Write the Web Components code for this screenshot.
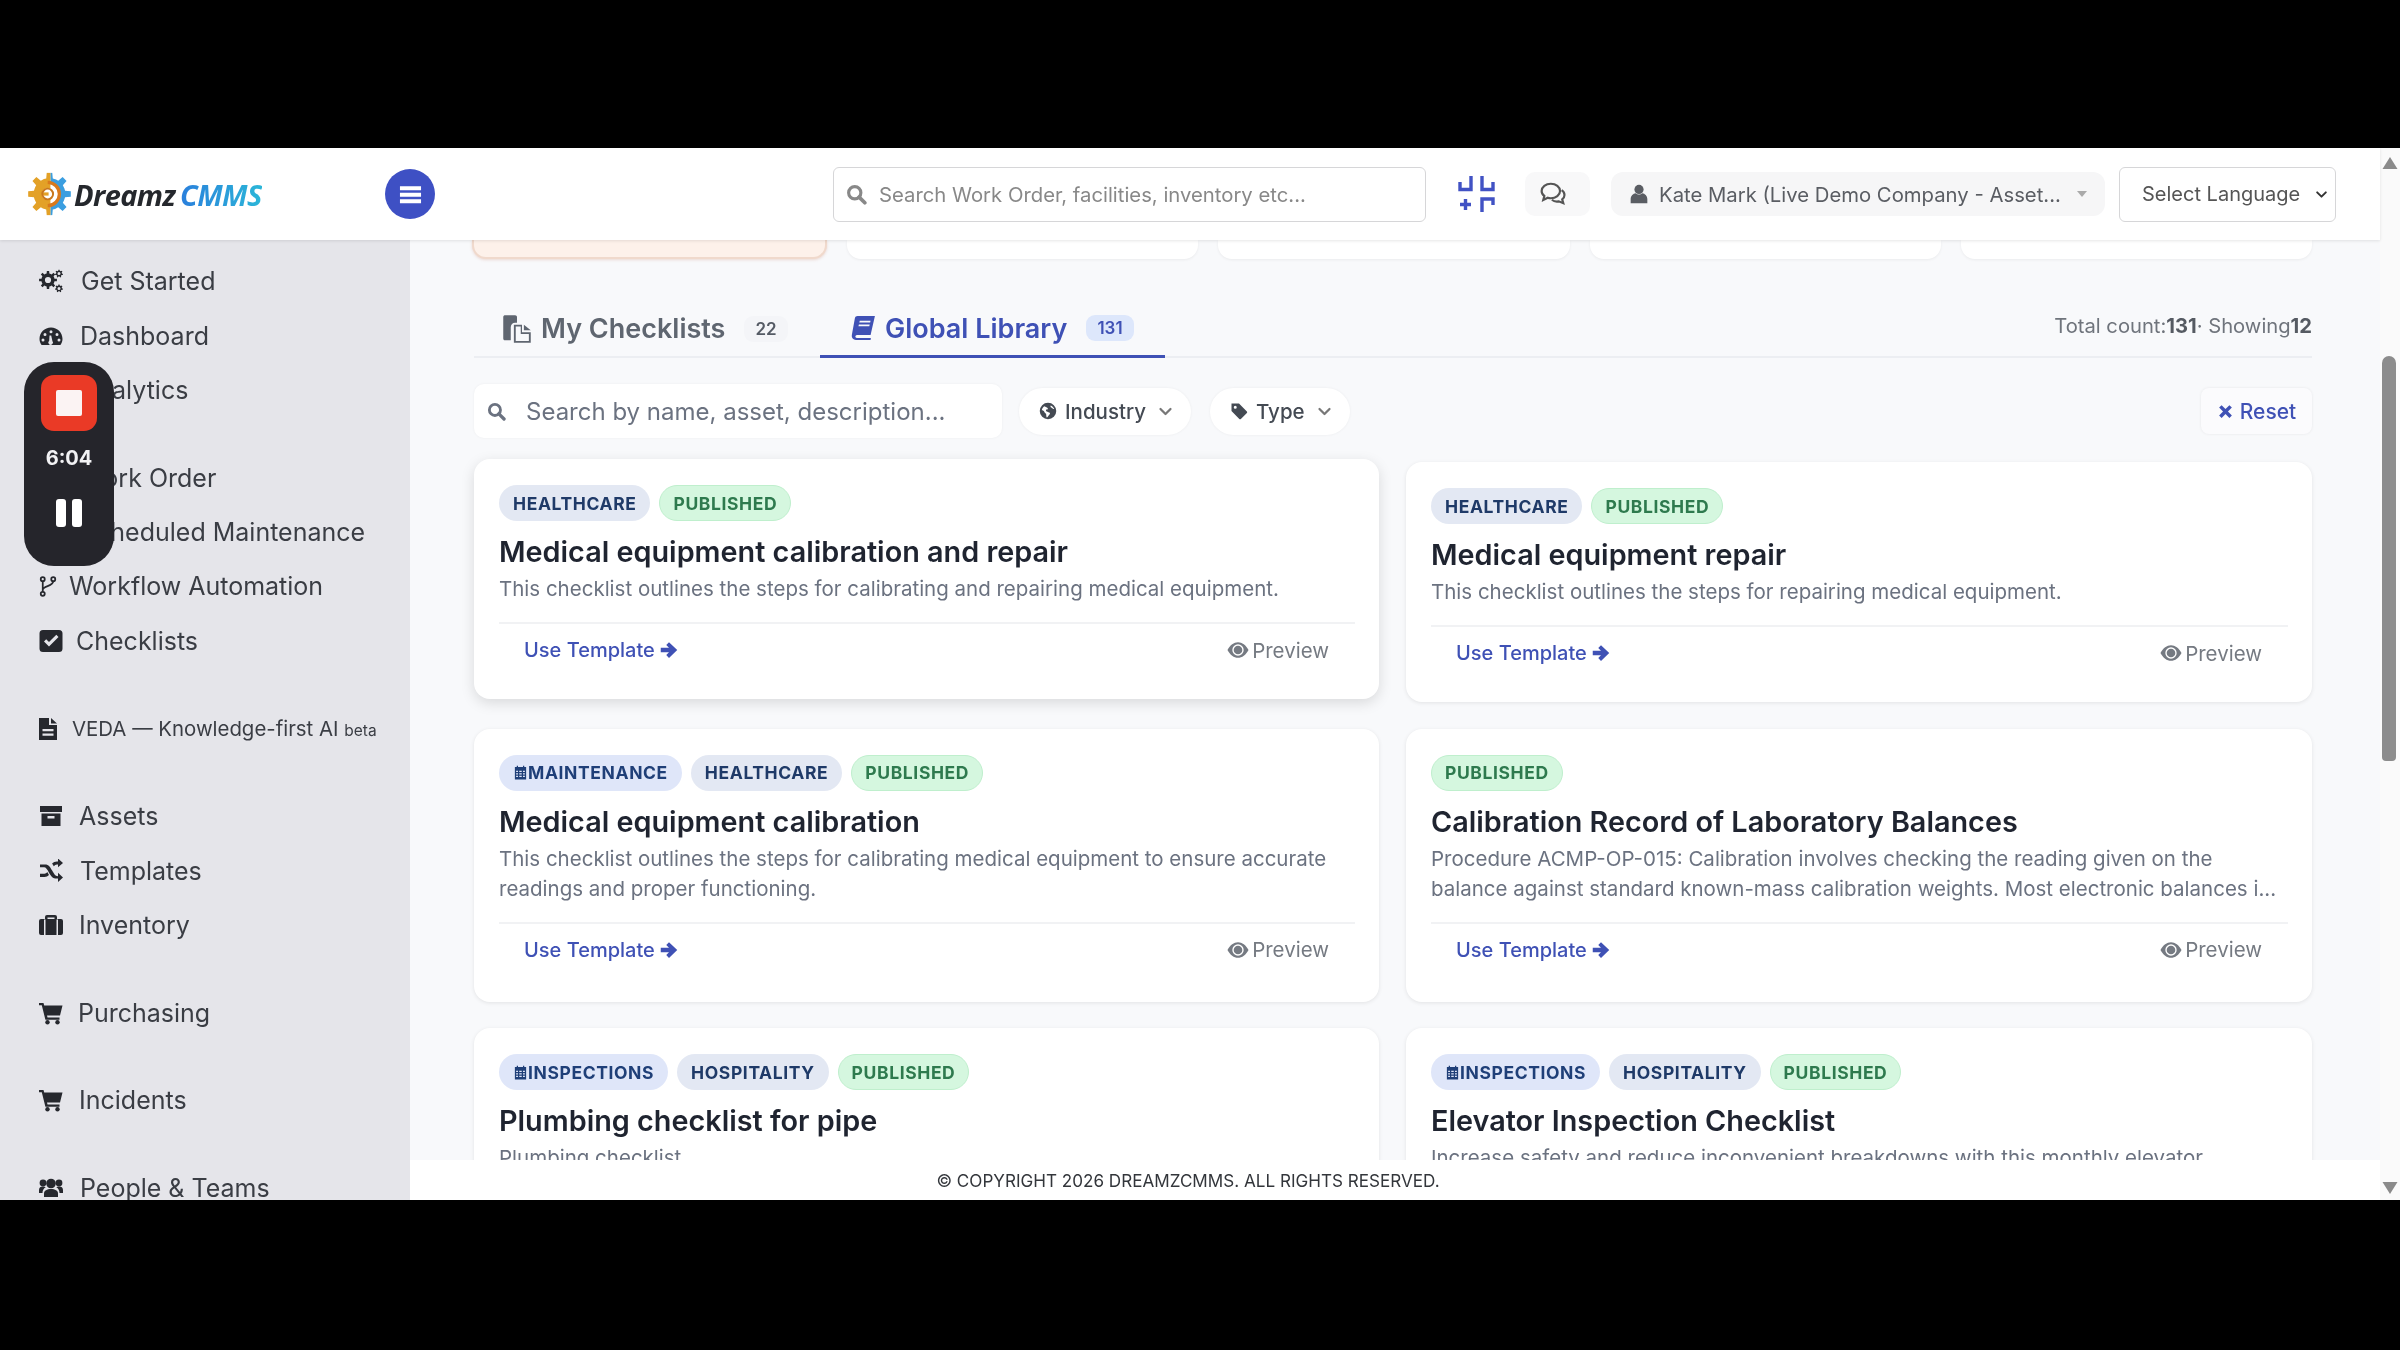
<!DOCTYPE html>
<html lang="en"><head><meta charset="utf-8"><title>DreamzCMMS</title>
<style>
html,body{margin:0;padding:0;background:#000;overflow:hidden;height:100%}
body{font-family:Inter,"Liberation Sans",sans-serif;color:#2f3238}
</style></head><body>
<x-app>
  <x-topbar slot="top"></x-topbar>
  <x-sidebar slot="side">
    <x-navgroup>
      <x-navitem icon="cogs" w="42">Get Started</x-navitem>
      <x-navitem icon="dash" w="41">Dashboard</x-navitem>
      <x-navitem icon="bars" w="41">Analytics</x-navitem>
    </x-navgroup>
    <x-navgroup>
      <x-navitem icon="file" w="41">Work Order</x-navitem>
      <x-navitem icon="cal" w="41">Scheduled Maintenance</x-navitem>
      <x-navitem icon="fork" w="30">Workflow Automation</x-navitem>
      <x-navitem icon="check" w="37">Checklists</x-navitem>
    </x-navgroup>
    <x-navgroup><x-navitem icon="file" w="33" small>VEDA — Knowledge-first AI <small>beta</small></x-navitem></x-navgroup>
    <x-navgroup>
      <x-navitem icon="archive" w="40">Assets</x-navitem>
      <x-navitem icon="random" w="41">Templates</x-navitem>
      <x-navitem icon="case" w="40">Inventory</x-navitem>
    </x-navgroup>
    <x-navgroup><x-navitem icon="cart" w="39">Purchasing</x-navitem></x-navgroup>
    <x-navgroup><x-navitem icon="cart" w="40">Incidents</x-navitem></x-navgroup>
    <x-navgroup><x-navitem icon="users" w="41">People &amp; Teams</x-navitem></x-navgroup>
  </x-sidebar>
  <x-main slot="main">
    <x-statrow></x-statrow>
    <x-tabs></x-tabs>
    <x-filters></x-filters>
    <x-cardgrid>
      <x-card hover>
        <x-tag slot="tags" kind="ind">HEALTHCARE</x-tag><x-tag slot="tags" kind="pub">PUBLISHED</x-tag>
        <span slot="title">Medical equipment calibration and repair</span>
        This checklist outlines the steps for calibrating and repairing medical equipment.
      </x-card>
      <x-card>
        <x-tag slot="tags" kind="ind">HEALTHCARE</x-tag><x-tag slot="tags" kind="pub">PUBLISHED</x-tag>
        <span slot="title">Medical equipment repair</span>
        This checklist outlines the steps for repairing medical equipment.
      </x-card>
      <x-card>
        <x-tag slot="tags" kind="cat">MAINTENANCE</x-tag><x-tag slot="tags" kind="ind">HEALTHCARE</x-tag><x-tag slot="tags" kind="pub">PUBLISHED</x-tag>
        <span slot="title">Medical equipment calibration</span>
        This checklist outlines the steps for calibrating medical equipment to ensure accurate readings and proper functioning.
      </x-card>
      <x-card>
        <x-tag slot="tags" kind="pub">PUBLISHED</x-tag>
        <span slot="title">Calibration Record of Laboratory Balances</span>
        Procedure ACMP-OP-015: Calibration involves checking the reading given on the<br>balance against standard known-mass calibration weights. Most electronic balances i...
      </x-card>
      <x-card>
        <x-tag slot="tags" kind="cat">INSPECTIONS</x-tag><x-tag slot="tags" kind="ind">HOSPITALITY</x-tag><x-tag slot="tags" kind="pub">PUBLISHED</x-tag>
        <span slot="title">Plumbing checklist for pipe</span>
        Plumbing checklist
      </x-card>
      <x-card>
        <x-tag slot="tags" kind="cat">INSPECTIONS</x-tag><x-tag slot="tags" kind="ind">HOSPITALITY</x-tag><x-tag slot="tags" kind="pub">PUBLISHED</x-tag>
        <span slot="title">Elevator Inspection Checklist</span>
        Increase safety and reduce inconvenient breakdowns with this monthly elevator
      </x-card>
    </x-cardgrid>
  </x-main>
  <x-footer slot="foot">© COPYRIGHT 2026 DREAMZCMMS. ALL RIGHTS RESERVED.</x-footer>
  <x-scrollbar slot="bar"></x-scrollbar>
</x-app>
<x-recorder></x-recorder>
<script>
function gear(cx,cy,r,n,hole){
  let d='';const ri=r*.74,st=Math.PI*2/n;
  for(let i=0;i<n;i++){
    const a=i*st-Math.PI/2,w=st*.22;
    const p=[[ri,a-st*.5+w*.2],[ri,a-w*1.2],[r,a-w*.75],[r,a+w*.75],[ri,a+w*1.2]];
    p.forEach((q,j)=>{d+=(i==0&&j==0?'M':'L')+(cx+q[0]*Math.cos(q[1])).toFixed(2)+' '+(cy+q[0]*Math.sin(q[1])).toFixed(2)});
  }
  d+='Z';
  if(hole)d+=`M${cx-hole} ${cy}a${hole} ${hole} 0 1 0 ${hole*2} 0a${hole} ${hole} 0 1 0 ${-hole*2} 0Z`;
  return d;
}
const ICONS={
 cogs:`<path fill-rule="evenodd" d="${gear(9,11,9,8,3.1)}"/><path fill-rule="evenodd" d="${gear(20,4.6,4,7,1.5)}"/><path fill-rule="evenodd" d="${gear(20,19.4,4,7,1.5)}"/>`,
 dash:`<path fill-rule="evenodd" d="M2.6 21C1.4 19.4.5 17.3.5 15 .5 8.6 5.6 3.5 12 3.5S23.500 8.600 23.500 15c0 2.300-.9 4.400-2.100 6zM12 6.200a1.500 1.500 0 1 0 0 3 1.500 1.500 0 0 0 0-3zM6 9a1.500 1.500 0 1 0 0 3 1.500 1.500 0 0 0 0-3zM18 9a1.500 1.500 0 1 0 0 3 1.500 1.500 0 0 0 0-3zM4 14.500a1.500 1.500 0 1 0 0 3 1.500 1.500 0 0 0 0-3zM20 14.500a1.500 1.500 0 1 0 0 3 1.500 1.500 0 0 0 0-3zM10.500 11.500l-.3 5.200a2.300 2.300 0 1 0 3.200.3l-1.200-5.500z"/>`,
 bars:`<path d="M2 21h20v2H2zM4 12h4v8H4zM10 5h4v15h-4zM16 9h4v11h-4z"/>`,
 cal:`<path fill-rule="evenodd" d="M2 4h20v18H2zM4 9v11h16V9z"/>`,
 fork:`<g fill="none" stroke="currentColor" stroke-width="2"><circle cx="6" cy="3.600" r="2.300"/><circle cx="6" cy="20.400" r="2.300"/><circle cx="18" cy="3.600" r="2.300"/><path d="M6 6v12M18 6c0 6-12 5-12 10"/></g>`,
 check:`<path fill-rule="evenodd" d="M4 1h16a3.500 3.500 0 0 1 3.500 3.500v15A3.500 3.500 0 0 1 20 23H4a3.500 3.500 0 0 1-3.500-3.500v-15A3.500 3.500 0 0 1 4 1zM5 12.500l5 5L19.500 8 17.300 5.800 10 13 7.200 10.300z"/>`,
 file:`<path fill-rule="evenodd" d="M3 1h10v7h8v15H3zM15 1l6 5.500h-6zM6.500 12v2.200h11V12zM6.500 16.500v2.200h11v-2.200z"/>`,
 archive:`<path fill-rule="evenodd" d="M1 2h22v6H1zM2.500 9.500h19V22h-19zM8.500 12v2.500h7V12z"/>`,
 random:`<path d="M1 6h5c4 0 5 2.500 7 6s3 6 6 6h0v-3.500l5 5-5 4.500v-3.500h-1c-4.500 0-6-2.500-8-6s-3-5.500-5-5.500H1zM1 15.500h4.500c1 0 2-.6 2.800-1.600l1.700 3c-1.200 1.300-2.700 2-4.500 2H1zM19 3V0l5 4.500L19 9V6h-1c-1.500 0-2.400.8-3.200 2l-1.700-3C14.300 3.800 16 3 18 3z" transform="translate(0 -.5) scale(1 .98)"/>`,
 case:`<path fill-rule="evenodd" d="M8 2h8a2 2 0 0 1 2 2v2h4a2 2 0 0 1 2 2v12a2 2 0 0 1-2 2H2a2 2 0 0 1-2-2V8a2 2 0 0 1 2-2h4V4a2 2 0 0 1 2-2zM8.500 4.500V6h7V4.500zM5 6.500V22h1.500V6.500zM17.500 6.500V22H19V6.500z"/>`,
 cart:`<path fill-rule="evenodd" d="M0 2h4.500l.7 2.500H23.500l-2.500 10H8l.5 2h12v2.300H6.400L2.800 4.300H0z"/><circle cx="8.500" cy="21.300" r="2.200"/><circle cx="18.500" cy="21.300" r="2.200"/>`,
 users:`<circle cx="12" cy="7.500" r="4.800"/><path d="M5 21v-3.500C5 14.500 8 13 12 13s7 1.500 7 4.500V21z"/><circle cx="4" cy="7" r="3.400"/><circle cx="20" cy="7" r="3.400"/><path d="M0 17v-3c0-2.500 1.500-3.500 4-3.500 1 0 2 .2 2.700.7C4.500 12.500 3.500 14.500 3.500 17zM24 17v-3c0-2.500-1.500-3.500-4-3.500-1 0-2 .2-2.700.7 2.200 1.300 3.200 3.300 3.200 5.800z"/>`,
 search:`<circle cx="10" cy="10" r="7" fill="none" stroke="currentColor" stroke-width="3.600"/><path d="M15 15l6.500 6.500" stroke="currentColor" stroke-width="4.200" stroke-linecap="round"/>`,
 arrow:`<path d="M12 1.500L23 12 12 22.500 8.300 18.800 12 15H1V9h11L8.300 5.200z"/>`,
 eye:`<path fill-rule="evenodd" d="M.5 12C3.500 6.500 7.500 3.500 12 3.500S20.500 6.500 23.500 12c-3 5.500-7 8.500-11.500 8.500S3.500 17.500.5 12zM12 5.800a6.200 6.200 0 1 0 0 12.400 6.200 6.200 0 0 0 0-12.400z"/><circle cx="12" cy="12" r="4.700"/>`,
 xmark:`<path d="M3 6.500L6.500 3 12 8.500 17.500 3 21 6.500 15.500 12 21 17.500 17.500 21 12 15.500 6.500 21 3 17.500 8.500 12z"/>`,
 globe:`<path fill-rule="evenodd" d="M12 1a11 11 0 1 1 0 22 11 11 0 0 1 0-22zM7 5.500c-1.500 1-3 3-3.200 5.500 1.500 0 2.700.7 3.200 2 .5 1.500 2 1.700 2.500 3 .3 1 0 3 .8 4.500 1.200 0 1.500-1 2.500-2.500 1-1.300 2-2 1.800-3.500-1-1.200-3-1.200-4.500-2-1-.7-1-1.800-.5-2.500 1.200.3 2-.2 2.300-1.500C11 7 9 6.500 7 5.500zM15.500 4.500c-.5 1.300 0 2.700 1.500 3 1 .7 1.800 2.200 3.300 1.700-.8-2-2.500-3.800-4.800-4.700z"/>`,
 tag:`<path fill-rule="evenodd" d="M2 2h10l10.500 10.500c.6.600.6 1.500 0 2.100l-8 8c-.6.600-1.500.6-2.100 0L2 12zM7 5a2 2 0 1 0 0 4 2 2 0 0 0 0-4z"/>`,
 down:`<path d="M4 8l8 8 8-8" fill="none" stroke="currentColor" stroke-width="3.600" stroke-linecap="round" stroke-linejoin="round"/>`,
 book:`<path fill-rule="evenodd" d="M7 1h16l-4 17.500H6.500c-1.200 0-1.700 1-1.500 1.800.2.600.8.900 1.500.9h12.200c.6 0 .6.500.5.900l-.3.900H5.500C3 23 1.300 21 1.700 18.500L4.500 3C4.800 1.700 5.700 1 7 1zM9 5.200l-.4 1.700h10l.4-1.700zM8.200 8.700l-.4 1.700h10l.4-1.700z"/>`,
 docs:`<path fill-rule="evenodd" d="M1 2.500C1 1.500 1.700 1 2.500 1h8c.8 0 1.500.6 1.500 1.500V7h-1.500c-2 0-3.500 1.500-3.500 3.500V21H2.500C1.700 21 1 20.500 1 19.500z"/><path fill-rule="evenodd" d="M9.500 8.500H16v6h7V23H9.500zM17.500 8.500l5.500 4.500h-5.500zM11 10v11.500h10.500V16H15v-6z"/>`,
 cal2:`<path fill-rule="evenodd" d="M3 3h3V1h2v2h8V1h2v2h3v20H3zM5 9v2h3V9zM10 9v2h4V9zM16 9v2h3V9zM5 13v2h3v-2zM10 13v2h4v-2zM16 13v2h3v-2zM5 17v2h3v-2zM10 17v2h4v-2zM16 17v2h3v-2z"/>`,
 user:`<circle cx="12" cy="6.500" r="5.500"/><path d="M2 23v-5c0-4 3-6.500 6-7 1 1 2.500 1.500 4 1.500s3-.5 4-1.500c3 .5 6 3 6 7v5z"/>`,
 chat:`<g fill="none" stroke="currentColor" stroke-width="2"><path d="M10 2.500c4.700 0 8.500 2.900 8.500 6.700s-3.800 6.700-8.500 6.700c-1 0-2-.1-2.800-.4L3 17.500l1-3.700C2.300 12.600 1.500 11 1.500 9.200 1.500 5.400 5.300 2.500 10 2.500z"/><path d="M20 8.500c1.600 1.100 2.600 2.700 2.600 4.500 0 1.600-.8 3-2.100 4l1 3.500-4.200-1.700c-2.200.4-4.700-.1-6.300-1.500"/></g>`,
 shrink:`<g fill="none" stroke="currentColor" stroke-width="3.400"><path d="M2 8v7.500h11V2M24 2v13.500h11V8M24 38V25h11v6"/><path d="M2 30.500h11M7.500 25v11"/></g>`,
 bars3:`<path d="M1 3.500h22v4H1zM1 10.300h22v4H1zM1 17h22v4H1z" />`,
 caret:`<path d="M2 6h20L12 18z"/>`,
 up:`<path d="M12 4l10 16H2z"/>`,
 dn:`<path d="M2 4h20L12 20z"/>`
};
function svg(name,w,h,vb){return `<svg xmlns="http://www.w3.org/2000/svg" width="${w}" height="${h||w}" viewBox="${vb||'0 0 24 24'}" fill="currentColor" style="display:block;flex:none">${ICONS[name]}</svg>`}
function def(tag,html,init){customElements.define(tag,class extends HTMLElement{
  constructor(){super();this.attachShadow({mode:'open'}).innerHTML=typeof html==='function'?html(this):html}
  connectedCallback(){if(typeof html==='function')this.shadowRoot.innerHTML=html(this);if(init)init(this)}
})}

def('x-app',`<style>
:host{display:grid;margin-top:148px;height:1052px;width:2400px;overflow:hidden;position:relative;background:#f8f9fb;filter:blur(.5px);
grid-template-columns:410px 1970px 20px;grid-template-rows:92px 920px 40px}
.t{grid-column:1/3;grid-row:1;display:flex;z-index:2}
.s{grid-column:1;grid-row:2/4;display:flex;min-height:0}
.m{grid-column:2;grid-row:2;display:flex;min-height:0;overflow:hidden}
.f{grid-column:2;grid-row:3;display:flex}
.b{grid-column:3;grid-row:1/4;display:flex}
::slotted(*){flex:1;min-width:0}
</style><div class="t"><slot name="top"></slot></div><div class="s"><slot name="side"></slot></div><div class="m"><slot name="main"></slot></div><div class="f"><slot name="foot"></slot></div><div class="b"><slot name="bar"></slot></div>`);

def('x-topbar',()=>`<style>
:host{display:flex;align-items:center;background:#fff;box-shadow:0 1px 3px rgba(0,0,0,.1);box-sizing:border-box;padding-left:28px;color:#555}
.logo{display:flex;align-items:center;width:234px;flex:none}
.lt{font:italic 700 29px "Open Sans",sans-serif;letter-spacing:-.6px;color:#25282d;margin-left:3px;white-space:nowrap}
.lt b{color:#2b8fd8;background:linear-gradient(90deg,#2a7fdc,#2bb6d8);-webkit-background-clip:text;background-clip:text;-webkit-text-fill-color:transparent;margin-left:5px;font-weight:700}
.ham{width:50px;height:50px;border-radius:50%;background:#3e50c4;color:#fff;display:flex;align-items:center;justify-content:center;margin-left:123px;flex:none}
.search{width:593px;height:55px;box-sizing:border-box;border:1px solid #d6d6d8;border-radius:6px;display:flex;align-items:center;padding-left:12px;gap:12px;margin-left:398px;color:#888;font-size:20.300px;flex:none;white-space:nowrap}
.grid{margin-left:32px;color:#4152c4;flex:none;display:flex}
.chat{margin-left:30px;width:65px;height:44px;box-sizing:border-box;padding-right:9px;background:#f8f8f9;border-radius:10px;display:flex;align-items:center;justify-content:center;color:#555;flex:none}
.user{margin-left:21px;width:494px;height:44px;box-sizing:border-box;background:#f6f6f7;border-radius:12px;display:flex;align-items:center;padding:0 17px 0 18px;gap:10px;font-size:20.300px;color:#5a5d63;white-space:nowrap;flex:none}
.user span{flex:1}.user i{color:#aaa;display:flex}
.lang{margin-left:14px;width:217px;height:55px;box-sizing:border-box;border:1px solid #d6d6d8;border-radius:6px;background:#fff;font-size:20px;color:#555;padding:0 7px 0 22px;flex:none;display:flex;align-items:center;justify-content:space-between;white-space:nowrap}
.lang i{display:flex;color:#333}
</style>
<div class="logo"><svg width="43" height="44" viewBox="0 0 24 24" style="flex:none"><defs><clipPath id="l"><rect width="12.500" height="24"/></clipPath><clipPath id="r"><rect x="12.500" width="12" height="24"/></clipPath></defs>
<path clip-path="url(#r)" fill="#3b9ee0" fill-rule="evenodd" d="${gear(12,12,12,8,5.500)}"/><path clip-path="url(#l)" fill="#e3a127" fill-rule="evenodd" d="${gear(12,12,12,8,0)}"/>
<path d="M11 5.500a6.500 6.500 0 0 1 0 13" fill="none" stroke="#d9791c" stroke-width="1.800"/><circle cx="11" cy="12" r="3.400" fill="#fff"/><path d="M6.500 12h5" stroke="#e3a127" stroke-width="1.800"/><circle cx="11" cy="12" r="3" fill="none" stroke="#c9771d" stroke-width="1.100"/></svg>
<span class="lt">Dreamz<b>CMMS</b></span></div>
<div class="ham">${svg('bars3',23)}</div>
<div class="search">${svg('search',21)}<span>Search Work Order, facilities, inventory etc...</span></div>
<div class="grid">${svg('shrink',37,42,'0 0 37 40')}</div>
<div class="chat">${svg('chat',26)}</div>
<div class="user">${svg('user',20)}<span>Kate Mark (Live Demo Company - Asset...</span><i>${svg('caret',12)}</i></div>
<div class="lang"><span>Select Language</span><i>${svg('down',13)}</i></div>`);

def('x-sidebar',`<style>:host{display:flex;flex-direction:column;gap:33.300px;background:#e5e5ea;padding-top:14px;overflow:hidden;box-sizing:border-box;height:960px}</style><slot></slot>`);
def('x-navgroup',`<style>:host{display:block}</style><slot></slot>`);
def('x-navitem',el=>{const n=el.getAttribute('icon');const ic=n==='file'?svg('file',18,22,'3 1 18 22'):n==='fork'?svg('fork',18,21,'2 0 20 24'):svg(n,24);
return `<style>
:host{display:flex;align-items:center;height:54.400px;padding-left:39px;color:#3a3d44;font-size:${el.hasAttribute('small')?'20.400':'25'}px;white-space:nowrap}
.i{width:${el.getAttribute('w')}px;flex:none;color:#26282e}
::slotted(small){font-size:15.500px}
</style><div class="i">${ic}</div><div><slot></slot></div>`});

def('x-main',`<style>:host{display:block;padding:0 68px 0 64px;box-sizing:border-box;overflow:hidden}</style><slot></slot>`);
def('x-statrow',`<style>:host{display:flex;gap:20px;height:19px;margin-left:-2px}
div{flex:1;background:#fff;border-radius:0 0 14px 14px;box-shadow:0 1px 3px rgba(0,0,0,.06)}
.a{background:#fdf1ea;border:2px solid #f0d9cc;border-top:0;box-shadow:0 1px 3px rgba(200,120,90,.25)}
</style><div class="a"></div><div></div><div></div><div></div><div></div>`);
def('x-tabs',()=>`<style>
:host{display:flex;align-items:flex-end;height:99px;box-sizing:border-box;border-bottom:2px solid #eceef2}
.tab{display:flex;align-items:center;font-size:27px;font-weight:600;color:#5f6670;white-space:nowrap;box-sizing:border-box;height:55px}
.t1{padding-left:28px;width:346px;gap:9px}
.t2{padding-left:30px;width:345px;height:57px;gap:9px;color:#3f51b5;border-bottom:3px solid #3f51b5;margin-bottom:-2px}
.b{font-size:17px;font-weight:600;padding:3px 11px;border-radius:9px;margin-left:10px}
.t1 .b{background:#f4f5f8;color:#555b65}.t2 .b{background:#dde7fb;color:#3f51b5;margin-left:10px}
.r{margin-left:auto;align-self:flex-start;margin-top:52px;line-height:30px;font-size:20.200px;color:#6f747c;white-space:nowrap}.r b{font-weight:700;color:#555a62}
</style>
<div class="tab t1">${svg('docs',30)}<span>My Checklists</span><span class="b">22</span></div>
<div class="tab t2">${svg('book',26)}<span>Global Library</span><span class="b">131</span></div>
<div class="r">Total count:<b>131</b>· Showing<b>12</b></div>`);
def('x-filters',()=>`<style>
:host{display:flex;align-items:center;margin-top:26px;height:54px;color:#444a53}
.s{width:528px;height:54px;background:#fff;border-radius:10px;box-shadow:0 0 3px rgba(0,0,0,.05);display:flex;align-items:center;padding-left:13px;gap:20px;color:#6b7280;font-size:24px;box-sizing:border-box;white-space:nowrap}
.p{height:47px;background:#fff;border-radius:24px;box-shadow:0 0 3px rgba(0,0,0,.06);display:flex;align-items:center;gap:8px;font-size:20.500px;font-weight:500;box-sizing:border-box;padding:0 18px 0 20px;margin-left:17px}
.p i{display:flex;color:#777;margin-left:4px}
.p+.p{margin-left:19px;padding-left:20px;padding-right:18px}
.re{margin-left:auto;height:46px;width:111px;box-sizing:border-box;background:#fbfbfd;border-radius:8px;box-shadow:0 0 3px rgba(0,0,0,.08);display:flex;align-items:center;justify-content:center;gap:6px;color:#3f51b5;font-size:21px;font-weight:500}
</style>
<div class="s">${svg('search',19)}<span>Search by name, asset, description...</span></div>
<div class="p">${svg('globe',18)}<span>Industry</span><i>${svg('down',15)}</i></div>
<div class="p">${svg('tag',18)}<span>Type</span><i>${svg('down',15)}</i></div>
<div class="re">${svg('xmark',17)}<span>Reset</span></div>`);
def('x-cardgrid',`<style>:host{display:grid;grid-template-columns:905px 906px;grid-template-rows:240px 273px auto;gap:26.500px 27px;margin-top:24px}</style><slot></slot>`);
def('x-card',el=>`<style>
:host{display:block;background:#fff;border-radius:16px;box-shadow:0 1px 4px rgba(0,0,0,.09);padding:26px 24px 34px 25px;box-sizing:border-box;min-width:0;${el.hasAttribute('hover')?'transform:translateY(-3px);box-shadow:0 4px 14px rgba(0,0,0,.13);':''}}
.tags{display:flex;gap:9px}
h3{margin:12px 0 0;font-size:28.800px;line-height:38px;font-weight:600;color:#1f2430;white-space:nowrap}
.d{margin-top:3px;font-size:20.500px;line-height:30px;color:#6b7280}
.ft{margin-top:18px;border-top:2px solid #f1f2f4;display:flex;justify-content:space-between;align-items:center;padding:11px 26px 0 25px;height:30px}
.u{display:flex;align-items:center;gap:5px;color:#3f51b5;font-size:20px;font-weight:500}
.p{display:flex;align-items:center;gap:3px;color:#757a82;font-size:20.500px}
</style><div class="tags"><slot name="tags"></slot></div><h3><slot name="title"></slot></h3><div class="d"><slot></slot></div>
<div class="ft"><span class="u"><span>Use Template</span>${svg('arrow',18)}</span><span class="p">${svg('eye',22)}<span>Preview</span></span></div>`);
def('x-tag',el=>{const k=el.getAttribute('kind');const c={ind:['#e3e8f3','#1f3a68','transparent'],pub:['#d5f7df','#2e7a4e','#bfefcd'],cat:['#dfe6f9','#1f3f78','transparent']}[k];
return `<style>:host{display:inline-flex;align-items:center;height:36px;box-sizing:border-box;padding:0 13px;border-radius:18px;background:${c[0]};color:${c[1]};border:1px solid ${c[2]};font-size:17.500px;font-weight:700;letter-spacing:.6px;white-space:nowrap}</style>${k==='cat'?svg('cal2',15):''}<slot></slot>`});
def('x-footer',`<style>:host{display:flex;align-items:center;justify-content:center;background:#fff;color:#33363b;font-size:17.100px;padding-right:414px;box-sizing:border-box;white-space:nowrap}</style><slot></slot>`);
def('x-scrollbar',()=>`<style>:host{display:flex;flex-direction:column;align-items:center;background:#fafafa;color:#8a8a8a;padding-top:6px;box-sizing:border-box}
.t{width:14px;height:405px;margin-top:184px;background:#8c8c8c;border-radius:7px 7px 4px 4px;margin-right:2px}.e{flex:1}</style>
${svg('up',18)}<div class="t"></div><div class="e"></div><div style="padding-bottom:3px">${svg('dn',18)}</div>`);
def('x-recorder',`<style>
:host{position:absolute;left:24px;top:362px;width:90px;height:204px;background:#25252b;border-radius:30px;display:flex;flex-direction:column;align-items:center;box-sizing:border-box;padding-top:13px;color:#f2f2f4;z-index:5;filter:blur(.5px)}
.r{width:56px;height:56px;border-radius:13px;background:#ea3a26;display:flex;align-items:center;justify-content:center}
.s{width:26px;height:26px;background:#fbf3f3;border-radius:2px}
.t{font:700 20px Inter,sans-serif;margin-top:15px;height:24px;line-height:24px}
.p{display:flex;gap:6px;margin-top:29px}.p div{width:10px;height:28px;background:#fff;border-radius:3px}
</style><div class="r"><div class="s"></div></div><div class="t">6:04</div><div class="p"><div></div><div></div></div>`);
</script>
</body></html>
